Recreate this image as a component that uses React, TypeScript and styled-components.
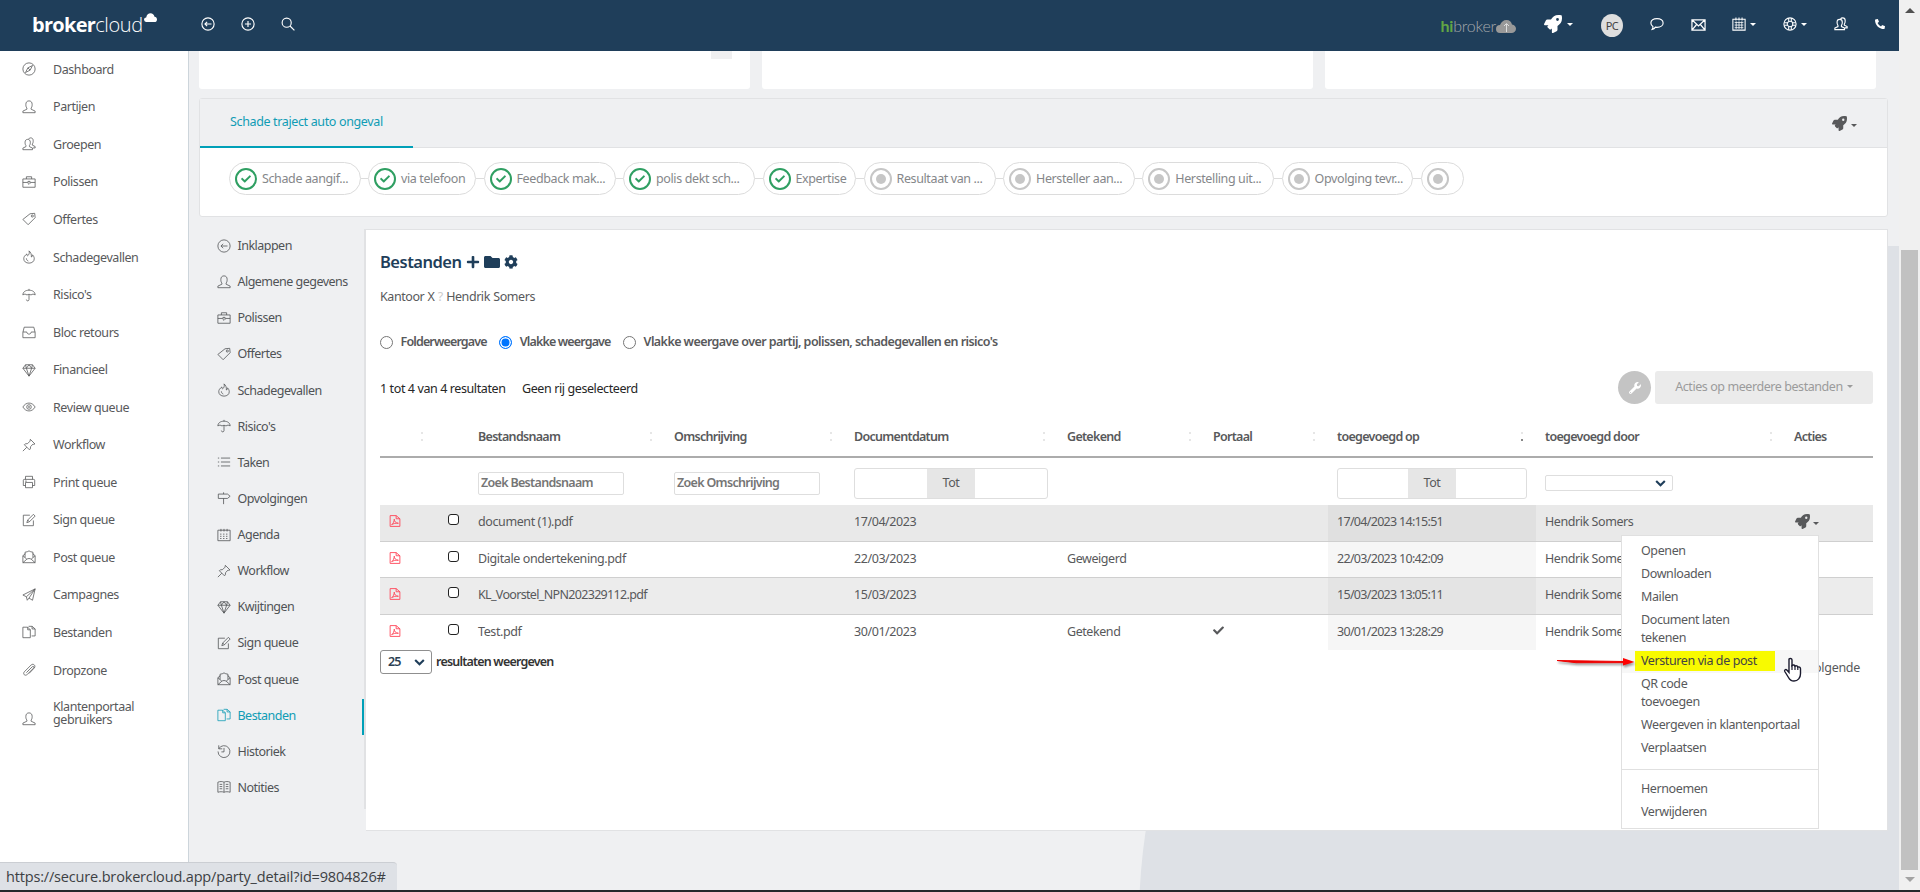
import { FC, ReactNode } from 'react'
import styled, { createGlobalStyle, css } from 'styled-components'
import { FaCheck, FaCog, FaFolder, FaPhoneAlt, FaPlus, FaRocket, FaWrench } from 'react-icons/fa'

const Global = createGlobalStyle`
	* {
		box-sizing: border-box;
	}

	body {
		margin: 0;
		overflow: hidden;
		font-family: "Noto Sans", "Open Sans", sans-serif;
		font-size: 12.5px;
		letter-spacing: -0.43px;
		color: #58595b;
		background: #eff0f2;
	}
`

const icons: Record<string, ReactNode> = {
	compass: <><circle cx="8" cy="8" r="7" /><path d="M12 4 9.3 9.3 4 12l2.7-5.3zM6.7 6.7l2.6 2.6" /></>,
	user: <path d="M1 14.5h14v-1.8l-4.6-2.2V9.2c1.2-1.3 1.2-3 1.2-4.2C11.6 2.5 10.2 1 8 1S4.4 2.5 4.4 5c0 1.2 0 2.9 1.2 4.2v1.3L1 12.7z" />,
	users: <><path d="M1 14.5h11v-1.8l-3.5-1.7V9.7c1-1.2 1-2.5 1-3.7 0-2-1.1-3.3-3-3.3s-3 1.3-3 3.3c0 1.2 0 2.5 1 3.7V11L1 12.7z" /><path d="M7.5 2.3C8 1.4 8.8 1 9.9 1c1.9 0 2.9 1.3 2.9 3.3 0 1.2 0 2.5-1 3.7v1.3l3.2 1.6v1.6h-2.6" /></>,
	briefcase: <><path d="M1 4.5h14V14H1zM5 4.5V2h6v2.5M1 8.5h5.5M9.5 8.5H15" /><path d="M6.8 7.3h2.4v2.2L8 10.7 6.800 9.500z" /></>,
	tag: <><path d="M9.2 2 14.5 1.5 15 6.5 7 14.5 1 8.5z" /><circle cx="11.8" cy="4.6" r="1.2" /></>,
	flame: <path d="M8 1c.8 2 .2 3.5-.8 5-.6.9-1.5.7-1.5-.5v-1C3 6.3 2 8 2 10c0 3 2.5 5 6 5s6-2 6-5c0-1.800-.8-3.300-2-4.500 0 1.500-.4 2.300-1.300 2.500C11 5 10 2.500 8 1zM5 9.500c0 1.500.8 2.600 2.200 3.200" />,
	umbrella: <path d="M1 8c0-3.5 3-5.500 7-5.500S15 4.500 15 8c-1.500-1.300-3.200-1.300-4.700 0C9 7 7 7 5.700 8 4.200 6.700 2.500 6.700 1 8zM8 1v1.500M8 7.500v5.700c0 2-3 2-3 0" />,
	inbox: <path d="M1 8.500 2.500 2.500h11L15 8.500v6H1zM1 8h4.500c0 3.200 5 3.200 5 0H15" />,
	diamond: <path d="M4 2h8l3 4-7 9-7-9zM1 6h14M5 6l3 9 3-9M4 2l1 4 3-4 3 4 1-4" />,
	eye: <><path d="M1 8c3.500-6 10.500-6 14 0-3.500 6-10.500 6-14 0z" /><circle cx="8" cy="8" r="2.6" /><circle cx="8" cy="8" r=".6" /></>,
	pin: <path d="M9.500 1.500 14.800 6.800 13.500 7.300 12.600 7 9.800 9.800 9.500 12.500 8.500 13.500 2.700 7.700 3.700 6.700 6.400 6.400 9.200 3.600zM5.500 10.500 1 15" />,
	printer: <path d="M4 5V1.500h8V5M4 12H1.500V6c0-.6.4-1 1-1h11c.6 0 1 .4 1 1v6H12M4 8.500h8v6H4zM5.500 7h-2" />,
	edit: <path d="M13 8.500v6H1.500V2.500H9M5.500 11l1-3 6.500-6.500 2 2L8.500 10zM6.500 8l2 2" />,
	mail: <path d="M1 3h14v11H1zM1 3l7 6.500L15 3M1 14l5-6M15 14l-5-6" />,
	mailOpen: <path d="M1 6.500 3.500 4.500v-2L6 2l2-1 2 1 2.500.5v2L15 6.500v8H1zM1 6.500l4.500 4M15 6.500l-4.500 4M1 14.500 5.500 10.500C7 9.500 9 9.500 10.500 10.500L15 14.500M3.500 4v4.500M12.500 4v4.500" />,
	plane: <path d="M15 1 1 8l4 2 1 4 2-2.500L12 14zM15 1 5 10M15 1 8 11.500" />,
	files: <path d="M1 2.500h5.500L9.500 5.500v9H1zM6.500 2.500v3h3M7.500 1.500h4L15 4.500v8h-4M11.500 1.500v3H15" />,
	clip: <path d="M5 11 11.500 4.500c1.500-1.500 3 0 1.800 1.300L6 13c-2.500 2.500-5.500-.5-3.300-3L10.500 2.200c2.500-2.200 5.700 1 3.500 3.500L8 12" />,
	list: <path d="M4.500 3.500H15M4.500 8H15M4.500 12.500H15M1 3.500h1.500M1 8h1.500M1 12.500h1.500" />,
	sign: <path d="M1.500 3.500v5h10.500L15 6 12 3.500zM7.500 1.500v2M7.500 8.500V15" />,
	calendar: <><path d="M1 2.500h14v12H1zM4.500 1v3M8 1v3M11.500 1v3" /><path strokeDasharray="1.6 1.8" d="M3.500 7h9.500M3.500 9.500h9.500M3.500 12h9.500" /></>,
	history: <path d="M2 1.500v4h4M2 5.500a6.800 6.800 0 1 1-.8 3M8 4.500V9H5" />,
	book: <path d="M1 2.500c2.500-1 5-1 7 0 2-1 4.500-1 7 0v11.500c-2.500-.8-5-.8-7 0-2-.8-4.500-.8-7 0zM8 2.500V14M3 5h3M3 7.500h3M3 10h3M10 5h3M10 7.500h3M10 10h3" />,
	back: <><circle cx="8" cy="8" r="7" /><path d="M12 8H4.500M7 5.500 4.500 8 7 10.500" /></>,
	add: <><circle cx="8" cy="8" r="7" /><path d="M8 4.500v7M4.500 8h7" /></>,
	search: <><circle cx="6.500" cy="6.500" r="5.200" /><path d="m10.300 10.300 5 5" /></>,
	chat: <path d="M8 1.800c4 0 7 2 7 5s-3 5-7 5c-.6 0-1.200 0-1.800-.2C5.400 13 4 14 2.500 14.200c.8-1 1-2.300.8-3.400C1.800 9.800 1 8.400 1 6.800c0-3 3-5 7-5z" />,
	grid: <><path d="M1 2.500h14v12.500H1zM4.500.5v3.500M8 .5v3.500M11.500.5v3.500" /><path strokeWidth=".9" d="M3 6.200h10M3 9.200h10M3 12.200h10M4.800 5v8.500M8 5v8.500M11.200 5v8.500" /></>,
	ring: <><circle cx="8" cy="8" r="7" /><circle cx="8" cy="8" r="3.200" /><path d="M6.500 1.200v4M9.500 1.200v4M6.500 10.800v4M9.500 10.800v4M1.200 6.500h4M1.200 9.500h4M10.800 6.500h4M10.800 9.500h4" /></>,
	pdf: <><path d="M1.500.8h8L14.500 5v10.200h-13zM9.500.8V5h5" /><path d="M3.500 13c2-1.500 3.500-4.500 3.500-7.500C7 8.500 9 11 12.500 11 9 10.500 5.500 11.500 3.500 13" /></>,
}

const Svg = styled.svg<{ $size: number }>`
	width: ${p => p.$size}px;
	height: ${p => p.$size}px;
	flex: none;
	fill: none;
	stroke: currentColor;
`

const Icon: FC<{ name: string; size?: number; weight?: number }> = ({ name, size = 14, weight = 0.9 }) => (
	<Svg viewBox="0 0 16 16" $size={size} strokeWidth={weight}>{icons[name]}</Svg>
)

const Caret = styled.i<{ $gap?: number }>`
	display: inline-block;
	margin-left: ${p => p.$gap ?? 4}px;
	border: 3px solid transparent;
	border-top-color: currentColor;
	border-bottom: 0;
	flex: none;
`

const Screen = styled.div`
	display: flex;
	width: 1920px;
	height: 892px;
	overflow: hidden;
	border-bottom: 2px solid #25272a;
	position: relative;
`

const Frame = styled.div`
	width: 1899px;
	display: flex;
	flex-direction: column;
`

/* top bar */

const TopBar = styled.header`
	height: 51px;
	flex: none;
	background: #1f3e5a;
	color: #fff;
	display: flex;
	align-items: center;
	padding-left: 32px;
	padding-bottom: 3px;
	position: relative;
	z-index: 1;
`

const Brand = styled.div`
	width: 169px;
	display: flex;
	font: 300 20px/24px "Open Sans", sans-serif;
	letter-spacing: -0.4px;
	padding-top: 2px;

	b {
		font-weight: 700;
		letter-spacing: -0.7px;
	}

	svg {
		margin: 0 0 0 1px;
	}
`

const BarItem = styled.a<{ $gap?: number }>`
	display: flex;
	align-items: center;
	margin-left: ${p => p.$gap ?? 0}px;
`

const Spacer = styled.div`
	flex: 1;
`

const HiBroker = styled.div`
	display: flex;
	align-items: center;
	font: 300 16px/20px Lato, sans-serif;
	letter-spacing: -0.2px;
	color: #a5a8ab;
	padding-top: 4px;
	margin-right: 28px;

	b {
		color: #62a744;
		font-weight: 700;
	}
`

const Avatar = styled.div`
	width: 22px;
	height: 23px;
	border-radius: 50%;
	background: #dedede;
	color: #444;
	font-size: 11px;
	line-height: 23px;
	text-align: center;
	margin: 3px 0 0 28px;
`

/* navigation */

const Body = styled.div`
	flex: 1;
	display: flex;
	min-height: 0;
`

const Side = styled.nav`
	width: 189px;
	flex: none;
	background: #fff;
	border-right: 1px solid #cdd5db;
`

const SideItem = styled.a`
	display: flex;
	align-items: center;
	height: 37.56px;
	padding: 0 40px 1px 22px;
	gap: 17px;
	line-height: 13px;

	&:last-child {
		padding-top: 10px;
		align-items: flex-end;
	}
`

const SubNav = styled.nav`
	width: 167px;
	height: 580px;
	flex: none;
	border-right: 2px solid #e1e2e4;
`

const SubItem = styled.a<{ $active?: boolean }>`
	display: flex;
	align-items: center;
	height: 36.13px;
	padding: 0 0 3px 17.5px;
	gap: 7px;
	white-space: nowrap;
	letter-spacing: -0.52px;
	color: ${p => (p.$active ? '#109cb5' : '#505356')};
	border-right: 2px solid ${p => (p.$active ? '#00a0b8' : 'transparent')};
`

/* page */

const Main = styled.main`
	flex: 1;
	min-width: 0;
	padding: 0 11px 0 10px;
	position: relative;
`

const Blob = styled.div`
	position: absolute;
	z-index: -1;
	left: 950px;
	right: 0;
	top: 195px;
	bottom: -30px;
	background: #dee1e6;
	border-top-left-radius: 100%;
`

const BlobEdge = styled.div`
	position: absolute;
	z-index: -1;
	right: 0;
	top: 195px;
	width: 20px;
	height: 400px;
	background: #dee1e6;
`

const TopCards = styled.div`
	display: grid;
	grid-template-columns: 551px 551px 551px;
	gap: 12px;
	height: 38px;
`

const TopCard = styled.div`
	background: #fff;
	border-radius: 0 0 3px 3px;
	padding-left: 512px;

	i {
		display: block;
		width: 21px;
		height: 8px;
		background: #f0f0f1;
	}
`

const Track = styled.section`
	margin-top: 9px;
	height: 119px;
	background: #fff;
	border: 1px solid #e1e2e4;
	border-radius: 3px;
`

const TrackHead = styled.div`
	height: 49px;
	background: #eff0f2;
	border-bottom: 1px solid #e1e2e4;
	display: flex;
	justify-content: space-between;
	padding-right: 30px;
`

const Tab = styled.div`
	width: 213px;
	height: 49px;
	padding: 13px 0 0 30px;
	line-height: 20px;
	letter-spacing: -0.36px;
	color: #109cb5;
	border-bottom: 2px solid #00a0b8;
`

const Tools = styled.div`
	display: flex;
	align-items: center;
	color: #58595b;

	i {
		margin-top: 5px;
	}
`

const Steps = styled.div`
	display: flex;
	padding: 14px 0 0 29px;
`

const Step = styled.div<{ $width: number }>`
	width: ${p => p.$width}px;
	height: 33px;
	border: 1px solid #dcdcdc;
	border-radius: 17px;
	display: flex;
	align-items: center;
	gap: 5px;
	padding-left: 5px;
	color: #85878a;
	letter-spacing: -0.38px;
	white-space: nowrap;
`

const Link = styled.div`
	width: 7.5px;
	height: 1px;
	margin-top: 16px;
	background: #dcdcdc;
`

const Dot = styled.span<{ $done: boolean }>`
	width: 22px;
	height: 22px;
	flex: none;
	border-radius: 50%;
	border: 2px solid ${p => (p.$done ? '#2f9f62' : '#c6c6c6')};
	color: #2f9f62;
	display: flex;
	align-items: center;
	justify-content: center;

	&::after {
		content: "";
		display: ${p => (p.$done ? 'none' : 'block')};
		width: 10px;
		height: 10px;
		border-radius: 50%;
		background: #c6c6c6;
	}
`

const Detail = styled.div`
	display: flex;
	margin-top: 12px;
`

const Card = styled.section`
	flex: 1;
	height: 602px;
	background: #fff;
	border: 1px solid #e1e2e4;
	border-left: 0;
	padding: 20px 14px 0;
	line-height: 20px;
`

const Title = styled.h2`
	margin: 0;
	height: 24px;
	display: flex;
	align-items: center;
	gap: 4px;
	color: #1f3e5a;
	font-size: 16.5px;
	font-weight: 600;
	letter-spacing: -0.5px;
`

const Crumbs = styled.div`
	margin-top: 13px;
	word-spacing: 0.5px;

	i {
		color: #ccc;
		font-style: normal;
	}
`

const Radios = styled.div`
	display: flex;
	margin-top: 25px;
	font-weight: 600;
	letter-spacing: -0.85px;
`

const Radio = styled.label<{ $on?: boolean }>`
	display: flex;
	align-items: center;
	margin-right: 12.5px;

	&:last-child {
		letter-spacing: -0.57px;
	}

	&::before {
		content: "";
		width: 11px;
		height: 11px;
		margin: 1px 7.5px 0 0;
		border-radius: 50%;
		border: 1px solid ${p => (p.$on ? '#0075ff' : '#767676')};
		${p => p.$on && css`
			background: #0075ff;
			box-shadow: inset 0 0 0 1.5px #fff;
		`}
	}
`

const Summary = styled.div`
	display: flex;
	align-items: center;
	justify-content: space-between;
	margin-top: 19px;
	height: 33px;
	color: #262626;

	& > div:first-child {
		padding-top: 2px;
		letter-spacing: -0.4px;
	}

	span + span {
		margin-left: 16.5px;
	}
`

const Bulk = styled.div`
	display: flex;
	gap: 4px;
`

const Round = styled.div`
	width: 33px;
	height: 33px;
	border-radius: 50%;
	background: #c4c4c4;
	color: #fff;
	display: flex;
	align-items: center;
	justify-content: center;
`

const BulkButton = styled.div`
	width: 218px;
	height: 33px;
	border-radius: 3px;
	background: #ebebeb;
	color: #9b9b9b;
	display: flex;
	align-items: center;
	justify-content: center;
	padding-bottom: 2px;
`

const columns = css`
	display: grid;
	grid-template-columns: 56px 33px 196px 180px 213px 146px 124px 208px 249px 88px;
`

const Head = styled.div`
	${columns}
	height: 54px;
	border-bottom: 2px solid #acacac;
	font-weight: 600;
	letter-spacing: -0.7px;
`

const Th = styled.div<{ $sort?: 'none' | 'both' | 'desc' }>`
	padding: 23px 12px 0 9px;
	display: flex;
	justify-content: space-between;

	&::after {
		content: "";
		display: ${p => (p.$sort === 'none' ? 'none' : 'block')};
		width: 4px;
		height: 11px;
		margin-top: 4px;
		background:
			conic-gradient(from 153deg at 50% 0, #e6e6e6 54deg, transparent 0) 0 0 / 4px 3px no-repeat,
			conic-gradient(from -27deg at 50% 100%, ${p => (p.$sort === 'desc' ? '#888' : '#e6e6e6')} 54deg, transparent 0) 0 8px / 4px 3px no-repeat;
	}
`

const Filters = styled.div`
	${columns}
	height: 47px;
	align-items: center;

	& > * {
		margin-left: 9px;
	}
`

const Search = styled.div`
	width: 146px;
	height: 23px;
	border: 1px solid #dedede;
	border-radius: 2px;
	padding-left: 2px;
	line-height: 20px;
	font-weight: 600;
	letter-spacing: -0.68px;
	color: #757575;
	margin-top: 4px;
`

const Range = styled.div<{ $side: number }>`
	display: grid;
	grid-template-columns: ${p => p.$side}px 48px ${p => p.$side}px;
	width: max-content;
	height: 31px;
	margin-top: 3px;
	border: 1px solid #dedede;
	border-radius: 3px;

	span {
		grid-column: 2;
		background: #e6e6e6;
		text-align: center;
		line-height: 28px;
	}
`

const Select = styled.div`
	width: 128px;
	height: 16px;
	border: 1px solid #dedede;
	border-radius: 2px;
	display: flex;
	align-items: center;
	justify-content: flex-end;
	padding-right: 6px;
	margin-top: 3px;
`

const Row = styled.div<{ $tone: string; $sorted: string; $height: number }>`
	${columns}
	height: ${p => p.$height}px;
	background: ${p => p.$tone};
	border-bottom: 1px solid #cfcfcf;

	&:last-child {
		border-bottom: 0;
	}

	& > * {
		padding: 7px 0 0 9px;
		white-space: nowrap;
	}

	& > :nth-child(8) {
		background: ${p => p.$sorted};
		letter-spacing: -0.7px;
	}
`

const FileName = styled.div<{ $caps: boolean }>`
	letter-spacing: ${p => (p.$caps ? -0.67 : -0.4)}px;
`

const Pdf = styled.div`
	color: #ff4558;

	svg {
		margin-top: 3px;
	}
`

const Check = styled.i`
	display: block;
	width: 11px;
	height: 11px;
	border: 1.5px solid #222;
	border-radius: 3px;
	margin: 2px 0 0 3px;
	background: #fff;
`

const Actions = styled.div`
	position: relative;
	display: flex;
	align-items: flex-start;
	color: #58595b;

	& > svg {
		margin: 2px 0 0 1px;
	}

	& > i {
		margin: 10px 0 0 3px;
	}
`

const Menu = styled.div`
	position: absolute;
	z-index: 2;
	top: 30px;
	right: 54px;
	width: 198px;
	height: 294px;
	background: #fff;
	border: 1px solid #e0e0e0;
	padding-top: 3.5px;
	color: #58595b;
	letter-spacing: -0.4px;

	hr {
		margin: 9px 0 8px;
		border: 0;
		border-top: 1px solid #e0e0e0;
	}
`

const MenuItem = styled.div<{ $hover?: boolean; $wrap?: number }>`
	position: relative;
	padding: 2.5px ${p => p.$wrap ?? 0}px 2.5px 19px;
	line-height: 18px;
	white-space: ${p => (p.$wrap ? 'normal' : 'nowrap')};
	background: ${p => (p.$hover ? '#f7f7f7' : 'none')};
`

const Mark = styled.span`
	display: block;
	width: 140px;
	height: 20px;
	line-height: 19px;
	margin: -1px 0 -1px -6px;
	padding-left: 6px;
	background: #f8fa00;
	color: #444;
`

const Arrow = styled.svg`
	position: absolute;
	left: -66px;
	top: 4px;
	filter: drop-shadow(1px 2px 1px rgba(0, 0, 0, 0.4));
`

const Hand = styled.svg`
	position: absolute;
	left: 161px;
	top: 7px;
`

const Footer = styled.div`
	display: flex;
	justify-content: space-between;
	font-weight: 600;
	letter-spacing: -0.8px;
	color: #333;
	line-height: 24px;
`

const PageSize = styled.div`
	display: flex;
	gap: 4px;

	div {
		width: 52px;
		height: 24px;
		padding: 0 6px 0 7px;
		border: 1px solid #8f8f8f;
		border-radius: 3px;
		display: flex;
		align-items: center;
		justify-content: space-between;
		color: #2b3f52;
	}
`

const Next = styled.a`
	margin: 6px 13px 0 0;
	font-weight: 400;
	letter-spacing: -0.3px;
	color: #58595b;
`

/* browser chrome */

const Scroll = styled.div`
	width: 21px;
	background: #f0f0f0;
	display: flex;
	flex-direction: column;
	align-items: center;
	padding-top: 8px;

	div {
		width: 17px;
		height: 620px;
		background: #c1c1c1;
		margin: 237px 0 7px;
	}

	i {
		border: 5px solid transparent;
	}

	i:first-child {
		border-top: 0;
		border-bottom-color: #505050;
	}

	i:last-child {
		border-bottom: 0;
		border-top-color: #a3a3a3;
	}
`

const Status = styled.div`
	position: absolute;
	z-index: 3;
	left: 0;
	bottom: 0;
	width: 397px;
	height: 28px;
	padding-left: 6px;
	background: #dee1e6;
	border-top: 1px solid #cbced3;
	border-radius: 0 4px 0 0;
	color: #3c4043;
	font: 14.5px/27px "Open Sans", sans-serif;
	letter-spacing: -0.17px;
	white-space: nowrap;
`

const Chevron: FC = () => (
	<svg width="11" height="7" viewBox="0 0 9 6" fill="none" stroke="#1f3e5a" strokeWidth="1.8"><path d="M.8.8l3.7 3.7L8.2.8" /></svg>
)

const side = [
	['compass', 'Dashboard'], ['user', 'Partijen'], ['users', 'Groepen'], ['briefcase', 'Polissen'], ['tag', 'Offertes'],
	['flame', 'Schadegevallen'], ['umbrella', "Risico's"], ['inbox', 'Bloc retours'], ['diamond', 'Financieel'],
	['eye', 'Review queue'], ['pin', 'Workflow'], ['printer', 'Print queue'], ['edit', 'Sign queue'],
	['mailOpen', 'Post queue'], ['plane', 'Campagnes'], ['files', 'Bestanden'], ['clip', 'Dropzone'],
	['user', 'Klantenportaal gebruikers'],
]

const sub = [
	['back', 'Inklappen'], ['user', 'Algemene gegevens'], ['briefcase', 'Polissen'], ['tag', 'Offertes'],
	['flame', 'Schadegevallen'], ['umbrella', "Risico's"], ['list', 'Taken'], ['sign', 'Opvolgingen'],
	['calendar', 'Agenda'], ['pin', 'Workflow'], ['diamond', 'Kwijtingen'], ['edit', 'Sign queue'],
	['mailOpen', 'Post queue'], ['files', 'Bestanden'], ['history', 'Historiek'], ['book', 'Notities'],
]

const steps: { label: string; width: number; done: boolean }[] = [
	{ label: 'Schade aangif...', width: 131.5, done: true },
	{ label: 'via telefoon', width: 108, done: true },
	{ label: 'Feedback mak...', width: 132, done: true },
	{ label: 'polis dekt sch...', width: 132, done: true },
	{ label: 'Expertise', width: 93.5, done: true },
	{ label: 'Resultaat van ...', width: 132, done: false },
	{ label: 'Hersteller aan...', width: 131.8, done: false },
	{ label: 'Herstelling uit...', width: 131.8, done: false },
	{ label: 'Opvolging tevr...', width: 131.5, done: false },
	{ label: '', width: 43, done: false },
]

const rows = [
	{ name: 'document (1).pdf', date: '17/04/2023', signed: '', portal: false, added: '17/04/2023 14:15:51', tone: '#e9e9e9', sorted: '#e0e0e0', height: 37 },
	{ name: 'Digitale ondertekening.pdf', date: '22/03/2023', signed: 'Geweigerd', portal: false, added: '22/03/2023 10:42:09', tone: '#fff', sorted: '#f6f6f6', height: 36 },
	{ name: 'KL_Voorstel_NPN202329112.pdf', date: '15/03/2023', signed: '', portal: false, added: '15/03/2023 13:05:11', tone: '#ececec', sorted: '#e4e4e4', height: 37 },
	{ name: 'Test.pdf', date: '30/01/2023', signed: 'Getekend', portal: true, added: '30/01/2023 13:28:29', tone: '#fff', sorted: '#f6f6f6', height: 35 },
]

const RowMenu: FC = () => (
	<Menu>
		<MenuItem>Openen</MenuItem>
		<MenuItem>Downloaden</MenuItem>
		<MenuItem>Mailen</MenuItem>
		<MenuItem $wrap={80}>Document laten tekenen</MenuItem>
		<MenuItem $hover>
			<Mark>Versturen via de post</Mark>
			<Arrow width="80" height="16" viewBox="0 0 80 16">
				<path d="M1 6.5 68 7.5V8.7H20z" fill="#e00" stroke="#e00" />
				<path d="M67 4 78.5 8 67 11.5z" fill="#f00" />
			</Arrow>
			<Hand width="20" height="26" viewBox="0 0 20 26">
				<path d="M6 2c1.5-1.3 3 0 3 1v5.5c1-1 2.7-.6 3 .6 1-.7 2.5-.2 2.8.9 1.2-.5 2.7.3 2.7 1.8v5c0 4-2.5 7.2-6.5 7.2-3 0-4.5-1.5-5.5-3.5L1.8 14.5c-.8-1.5 1-2.6 2-1.5L6 15.5z" fill="#fff" stroke="#1a1a2e" strokeWidth="1.4" />
				<path d="M9 8v5M12 9v4M14.8 10v3" stroke="#1a1a2e" strokeWidth="1.2" />
			</Hand>
		</MenuItem>
		<MenuItem $wrap={90}>QR code toevoegen</MenuItem>
		<MenuItem>Weergeven in klantenportaal</MenuItem>
		<MenuItem>Verplaatsen</MenuItem>
		<hr />
		<MenuItem>Hernoemen</MenuItem>
		<MenuItem>Verwijderen</MenuItem>
	</Menu>
)

const Header: FC = () => (
	<TopBar>
		<Brand>
			<b>broker</b>cloud
			<svg width="13" height="9" viewBox="0 0 13 9" fill="#fff"><path d="M2.5 9a2.3 2.3 0 0 1-.3-4.6C2.8 1.8 4.4.3 6.5.3s3.5 1.3 4 3.4C12 3.8 13 5 13 6.4 13 8 12 9 10.5 9z" /></svg>
		</Brand>
		<BarItem><Icon name="back" weight={1.3} /></BarItem>
		<BarItem $gap={26}><Icon name="add" weight={1.3} /></BarItem>
		<BarItem $gap={26}><Icon name="search" weight={1.3} /></BarItem>
		<Spacer />
		<HiBroker>
			<b>hi</b>broker
			<svg width="20" height="13" viewBox="0 0 20 13"><path d="M4 13a4 4 0 0 1 0-8C5 2 7.5 0 10.5 0c3 0 5 2 5.5 4.5 2.5.3 4 2 4 4.3 0 2.5-2 4.2-4.5 4.2z" fill="#999" /><path d="M10.5 12V4M8 6l2.500-2.500L13 6" stroke="#ddd" fill="none" /></svg>
		</HiBroker>
		<BarItem><FaRocket size={18} /><Caret $gap={5} /></BarItem>
		<Avatar>PC</Avatar>
		<BarItem $gap={27}><Icon name="chat" weight={1.3} /></BarItem>
		<BarItem $gap={27}><Icon name="mail" weight={1.3} size={15} /></BarItem>
		<BarItem $gap={26}><Icon name="grid" weight={1.2} /><Caret $gap={4} /></BarItem>
		<BarItem $gap={27}><Icon name="ring" weight={1.2} /><Caret $gap={4} /></BarItem>
		<BarItem $gap={27}><Icon name="users" weight={1.3} /></BarItem>
		<BarItem $gap={27}><FaPhoneAlt size={10} /></BarItem>
		<BarItem $gap={14} />
	</TopBar>
)

const Files: FC = () => (
	<Card>
		<Title>Bestanden <FaPlus size={14} /><FaFolder size={16} /><FaCog size={14} /></Title>
		<Crumbs>Kantoor X <i>?</i> Hendrik Somers</Crumbs>
		<Radios>
			<Radio>Folderweergave</Radio>
			<Radio $on>Vlakke weergave</Radio>
			<Radio>Vlakke weergave over partij, polissen, schadegevallen en risico's</Radio>
		</Radios>
		<Summary>
			<div><span>1 tot 4 van 4 resultaten</span><span>Geen rij geselecteerd</span></div>
			<Bulk>
				<Round><FaWrench size={12} /></Round>
				<BulkButton>Acties op meerdere bestanden<Caret /></BulkButton>
			</Bulk>
		</Summary>
		<Head>
			<Th><span /></Th>
			<Th $sort="none" />
			<Th>Bestandsnaam</Th>
			<Th>Omschrijving</Th>
			<Th>Documentdatum</Th>
			<Th>Getekend</Th>
			<Th>Portaal</Th>
			<Th $sort="desc">toegevoegd op</Th>
			<Th>toegevoegd door</Th>
			<Th $sort="none">Acties</Th>
		</Head>
		<Filters>
			<span />
			<span />
			<Search>Zoek Bestandsnaam</Search>
			<Search>Zoek Omschrijving</Search>
			<Range $side={72}><span>Tot</span></Range>
			<span />
			<span />
			<Range $side={70}><span>Tot</span></Range>
			<Select><Chevron /></Select>
		</Filters>
		<div>
			{rows.map((row, i) => (
				<Row key={row.name} $tone={row.tone} $sorted={row.sorted} $height={row.height}>
					<Pdf><Icon name="pdf" size={12} weight={1.2} /></Pdf>
					<div><Check /></div>
					<FileName $caps={row.name.includes('_')}>{row.name}</FileName>
					<div />
					<div>{row.date}</div>
					<div>{row.signed}</div>
					<div>{row.portal && <FaCheck size={11} />}</div>
					<div>{row.added}</div>
					<div>Hendrik Somers</div>
					{i === 0 ? <Actions><FaRocket size={15} /><Caret /><RowMenu /></Actions> : <div />}
				</Row>
			))}
		</div>
		<Footer>
			<PageSize><div>25<Chevron /></div>resultaten weergeven</PageSize>
			<Next>Volgende</Next>
		</Footer>
	</Card>
)

export default function App() {
	return (
		<Screen>
			<Global />
			<Frame>
				<Header />
				<Body>
					<Side>
						{side.map(([icon, label]) => <SideItem key={label}><Icon name={icon} />{label}</SideItem>)}
					</Side>
					<Main>
						<Blob />
						<BlobEdge />
						<TopCards>
							<TopCard><i /></TopCard>
							<TopCard />
							<TopCard />
						</TopCards>
						<Track>
							<TrackHead>
								<Tab>Schade traject auto ongeval</Tab>
								<Tools><FaRocket size={15} /><Caret /></Tools>
							</TrackHead>
							<Steps>
								{steps.map((step, i) => [
									i > 0 && <Link key={'link' + i} />,
									<Step key={i} $width={step.width}>
										<Dot $done={step.done}>{step.done && <FaCheck size={10} />}</Dot>
										{step.label}
									</Step>,
								])}
							</Steps>
						</Track>
						<Detail>
							<SubNav>
								{sub.map(([icon, label]) => (
									<SubItem key={label} $active={label === 'Bestanden'}><Icon name={icon} />{label}</SubItem>
								))}
							</SubNav>
							<Files />
						</Detail>
					</Main>
				</Body>
			</Frame>
			<Scroll><i /><div /><i /></Scroll>
			<Status>https://secure.brokercloud.app/party_detail?id=9804826#</Status>
		</Screen>
	)
}
